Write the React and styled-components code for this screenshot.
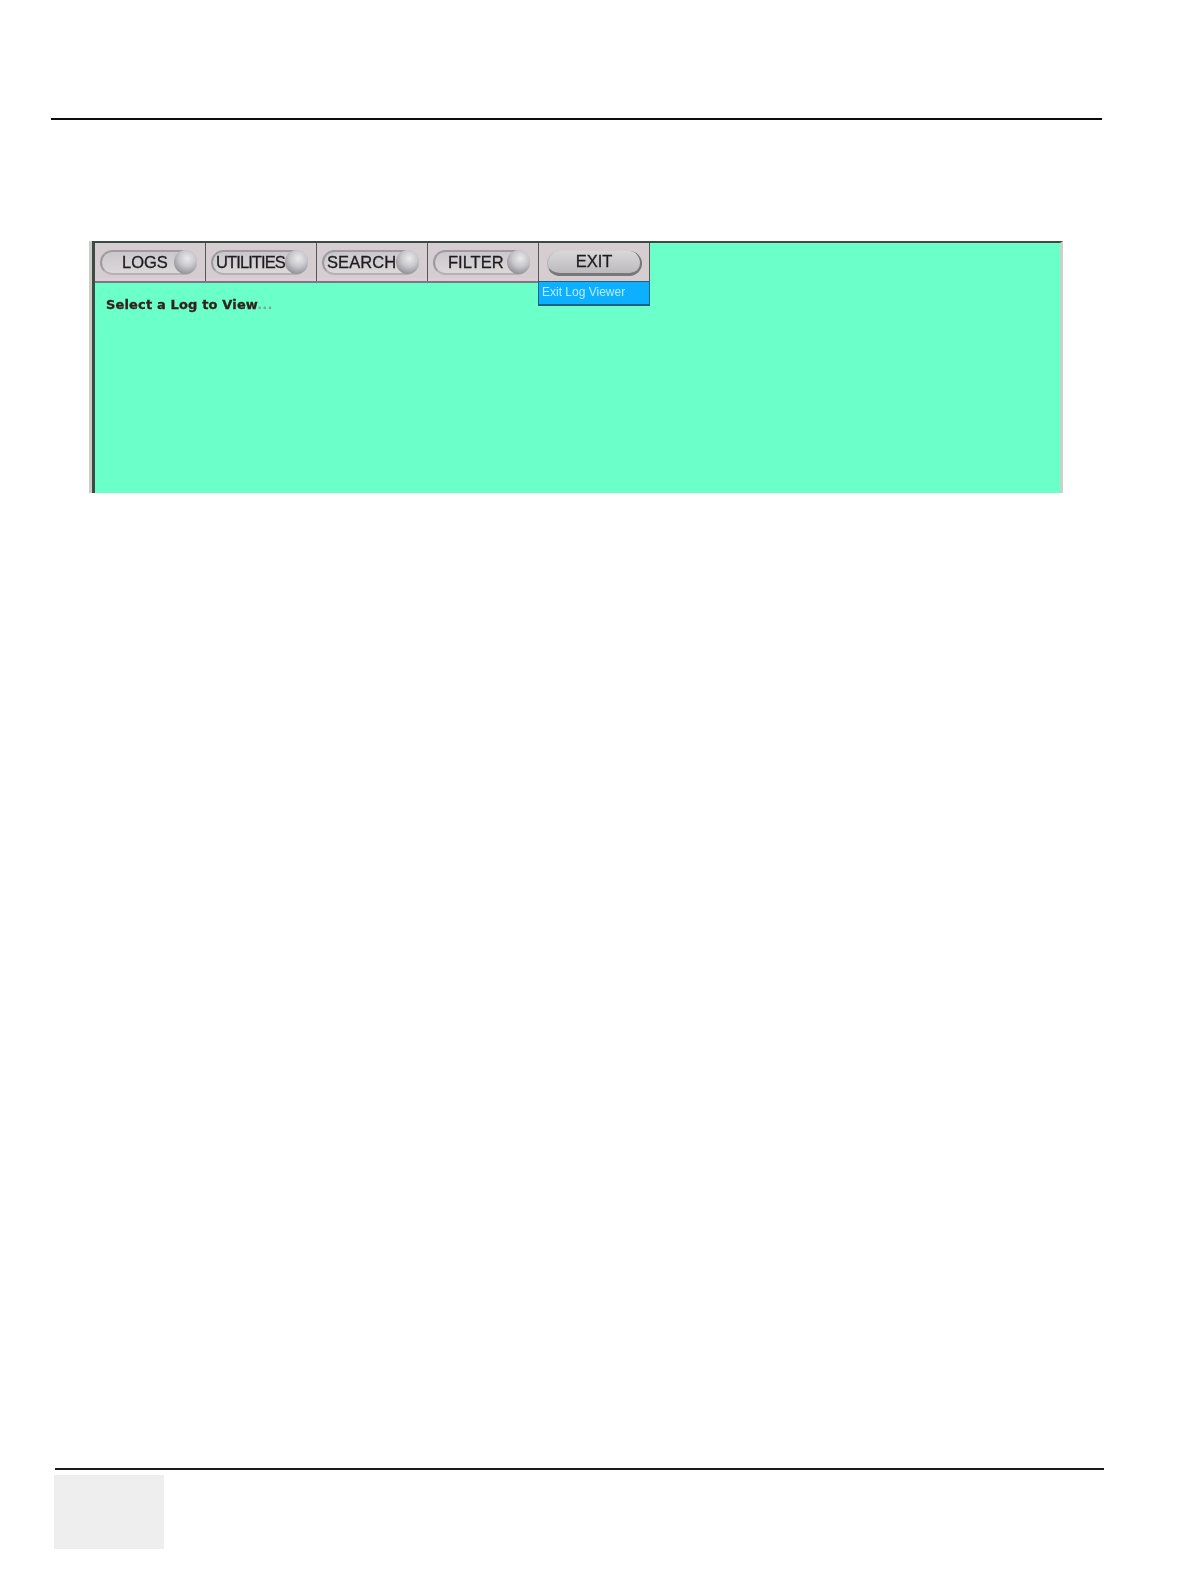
import styled, { createGlobalStyle } from "styled-components";

const tabs = [
  { label: "LOGS", offset: 20, spacing: 0 },
  { label: "UTILITIES", offset: 3, spacing: -0.9 },
  { label: "SEARCH", offset: 3, spacing: 0.1 },
  { label: "FILTER", offset: 13, spacing: 0 },
];

export default function App() {
  return (
    <Page>
      <GlobalStyle />
      <TopRule />
      <Panel>
        <Toolbar>
          {tabs.map((tab) => (
            <Tab key={tab.label}>
              <Pill>
                <PillLabel $offset={tab.offset} $spacing={tab.spacing}>{tab.label}</PillLabel>
                <Knob />
              </Pill>
            </Tab>
          ))}
          <ExitTab>
            <ExitPill>EXIT</ExitPill>
            <Menu>
              <MenuItem>Exit Log Viewer</MenuItem>
            </Menu>
          </ExitTab>
        </Toolbar>
        <Prompt>
          Select a Log to View<PromptDots>...</PromptDots>
        </Prompt>
      </Panel>
      <BottomRule />
      <FooterBox />
    </Page>
  );
}

const GlobalStyle = createGlobalStyle`
  html, body {
    margin: 0;
    background: #fff;
    font-family: "Liberation Sans", Arial, sans-serif;
  }
`;

const Page = styled.div`
  width: 1190px;
  height: 1584px;
  padding-top: 118px;
  box-sizing: border-box;
  overflow: hidden;
`;

const TopRule = styled.div`
  width: 1051px;
  height: 2px;
  margin-left: 51px;
  background: #0c0c0c;
`;

const Panel = styled.div`
  width: 971px;
  height: 252px;
  margin: 121px 0 0 92px;
  box-sizing: border-box;
  background: #6bffc9;
  border-top: 2px solid #3a4a44;
  border-left: 3px solid #3f4a46;
  border-right: 3px solid #c9d2c6;
  box-shadow: -3px 0 0 #c9cfc4;
`;

const Toolbar = styled.div`
  display: flex;
  width: 555px;
  height: 38px;
  background: #d5cdd0;
  border-bottom: 2px solid #6f7f7a;
`;

const Tab = styled.div`
  width: 111px;
  height: 38px;
  padding: 7px 8px 0 5px;
  box-sizing: border-box;
  border-right: 1px solid #55555a;
  box-shadow: inset 0 -3px 0 #e4c9dd;
`;

const Pill = styled.div`
  position: relative;
  display: flex;
  align-items: center;
  height: 25px;
  box-sizing: border-box;
  border-radius: 13px;
  border-left: 2px solid #9a9a9f;
  border-top: 2px solid #9c9ca1;
  border-bottom: 2px solid #b5b0b5;
  background: linear-gradient(#cbc7ca, #dcd8da);
`;

const PillLabel = styled.span`
  margin: -2px 0 0 ${(p) => p.$offset}px;
  font-size: 16.5px;
  line-height: 20px;
  letter-spacing: ${(p) => p.$spacing}px;
  color: #1c1c20;
  -webkit-text-stroke: 0.3px #1c1c20;
  filter: blur(0.4px);
`;

const Knob = styled.div`
  position: absolute;
  top: -2px;
  right: 0;
  width: 23px;
  height: 24px;
  border-radius: 50%;
  background: radial-gradient(circle at 58% 35%, #eaeaec 0%, #c8c8cc 40%, #707075 100%);
  filter: blur(0.4px);
`;

const ExitTab = styled.div`
  position: relative;
  width: 112px;
  height: 38px;
  margin-left: -1px;
  padding: 8px 7px 0 8px;
  box-sizing: border-box;
  border-left: 1px solid #55555a;
  border-right: 1px solid #55555a;
`;

const ExitPill = styled.div`
  height: 25px;
  box-sizing: border-box;
  border-radius: 13px;
  border-bottom: 3px solid #77777c;
  border-right: 2px solid #77777c;
  border-left: 1px solid #b5b5b8;
  background: linear-gradient(#dad7d9, #bcbabc);
  text-align: center;
  font-size: 16.5px;
  line-height: 21px;
  color: #1c1c20;
  -webkit-text-stroke: 0.3px #1c1c20;
  filter: blur(0.3px);
`;

const Menu = styled.div`
  position: absolute;
  top: 38px;
  left: -1px;
  width: 112px;
  height: 25px;
  box-sizing: border-box;
  background: #0db0ff;
  border: 1px solid #1f5f7f;
  border-bottom-width: 2px;
`;

const MenuItem = styled.div`
  padding: 3px 0 0 3px;
  font-size: 12px;
  line-height: 15px;
  color: #b5ecff;
  white-space: nowrap;
  filter: blur(0.5px);
`;

const Prompt = styled.div`
  margin: 14px 0 0 11px;
  font-family: "DejaVu Sans", sans-serif;
  font-size: 13px;
  font-weight: bold;
  line-height: 16px;
  letter-spacing: 0.15px;
  color: #32201a;
  -webkit-text-stroke: 0.3px #32201a;
  filter: blur(0.3px);
`;

const PromptDots = styled.span`
  color: #7aa88f;
  -webkit-text-stroke: 0;
`;

const BottomRule = styled.div`
  width: 1049px;
  height: 2px;
  margin: 975px 0 0 55px;
  background: #1a1a1a;
`;

const FooterBox = styled.div`
  width: 110px;
  height: 74px;
  margin: 5px 0 0 54px;
  background: #eeeeee;
`;
